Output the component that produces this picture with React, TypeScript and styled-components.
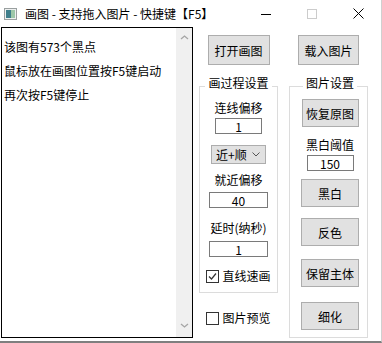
import React from 'react';
import styled, { createGlobalStyle } from 'styled-components';

const GlobalStyle = createGlobalStyle`
  html, body {
    margin: 0;
    padding: 0;
    background: #fff;
  }
  body {
    font-family: "Noto Sans CJK SC", "Microsoft YaHei", sans-serif;
    font-size: 12px;
    color: #000;
  }
  * {
    box-sizing: border-box;
  }
`;

const Window = styled.div`
  width: 382px;
  height: 343px;
  background: #fff;
  border-right: 1px solid #d0d0d0;
  border-bottom: 2px solid #7f7f7f;
  display: flex;
  flex-direction: column;
  overflow: hidden;
`;

const TitleBar = styled.div`
  height: 27px;
  flex-shrink: 0;
  display: flex;
  align-items: center;
`;

const AppIcon = styled.svg`
  margin-left: 4px;
  flex-shrink: 0;
`;

const Title = styled.span`
  flex: 1;
  margin-left: 8px;
  font-size: 12px;
  line-height: 16px;
  white-space: pre;
`;

const CaptionButton = styled.div`
  width: 46px;
  height: 27px;
  display: flex;
  align-items: center;
  justify-content: center;
`;

const Body = styled.div`
  flex: 1;
  display: flex;
  align-items: flex-start;
  padding-left: 1px;
`;

const TextPane = styled.div`
  width: 192px;
  height: 311px;
  border: 1px solid #000;
  display: flex;
  background: #fff;
`;

const TextContent = styled.div`
  flex: 1;
  padding: 7px 0 0 2px;
  font-size: 12px;
  line-height: 24px;
  white-space: nowrap;
`;

const ScrollTrack = styled.div`
  width: 16px;
  background: #f0f0f0;
  display: flex;
  flex-direction: column;
  justify-content: space-between;
  align-items: center;
  padding: 7px 0 9px;
`;

const Controls = styled.div`
  display: flex;
  gap: 11px;
  margin-left: 6px;
`;

const Column = styled.div`
  width: 79px;
  display: flex;
  flex-direction: column;
  align-items: center;
`;

const Button = styled.button<{ $w: number; $h: number; $mt: number }>`
  width: ${p => p.$w}px;
  height: ${p => p.$h}px;
  margin-top: ${p => p.$mt}px;
  flex-shrink: 0;
  padding: 0;
  background: #e1e1e1;
  border: 1px solid #adadad;
  border-radius: 0;
  font-family: inherit;
  font-size: 12px;
  color: #000;
`;

const GroupBox = styled.fieldset<{ $pb: number; $shift: number }>`
  width: 79px;
  margin: 11px 0 0;
  padding: 0 0 ${p => p.$pb}px ${p => p.$shift}px;
  min-width: 0;
  border: 1px solid #dcdcdc;
  display: flex;
  flex-direction: column;
  align-items: center;
`;

const GroupTitle = styled.legend`
  margin: 0 auto;
  padding: 0 3px 6px;
  font-size: 12px;
  line-height: 14px;
`;

const Label = styled.div<{ $mt: number }>`
  margin-top: ${p => p.$mt}px;
  font-size: 12px;
  line-height: 14px;
  white-space: nowrap;
`;

const NumberBox = styled.input<{ $w: number; $mt: number }>`
  width: ${p => p.$w}px;
  height: 16px;
  margin-top: ${p => p.$mt}px;
  padding: 0;
  border: 1px solid #7a7a7a;
  border-radius: 0;
  background: #fff;
  font-family: inherit;
  font-size: 12px;
  line-height: 14px;
  text-align: center;
  color: #000;
  outline: none;
`;

const ComboBox = styled.div`
  width: 55px;
  height: 19px;
  margin-top: 11px;
  padding: 0 5px 0 4px;
  background: #e1e1e1;
  border: 1px solid #adadad;
  display: flex;
  align-items: center;
  justify-content: space-between;
  font-size: 12px;
`;

const CheckRow = styled.label<{ $mt: number }>`
  margin-top: ${p => p.$mt}px;
  display: flex;
  align-items: center;
  gap: 3px;
  font-size: 12px;
  line-height: 14px;
  white-space: nowrap;
`;

const CheckBox = styled.span`
  width: 13px;
  height: 13px;
  border: 1px solid #333;
  background: #fff;
  display: flex;
  align-items: center;
  justify-content: center;
`;

const Chevron = ({ down }: { down?: boolean }) => (
  <svg width="9" height="5" viewBox="0 0 9 5">
    <path
      d={down ? 'M1 1 L4.5 4 L8 1' : 'M1 4 L4.5 1 L8 4'}
      fill="none"
      stroke="#a6a6a6"
      strokeWidth="1.3"
    />
  </svg>
);

const Check = ({ checked, label, mt }: { checked: boolean; label: string; mt: number }) => (
  <CheckRow $mt={mt}>
    <CheckBox>
      {checked && (
        <svg width="11" height="11" viewBox="0 0 11 11">
          <path d="M2 5.5 L4.5 8 L9 2.5" fill="none" stroke="#333" strokeWidth="1.2" />
        </svg>
      )}
    </CheckBox>
    {label}
  </CheckRow>
);

const lines = ['该图有573个黑点', '鼠标放在画图位置按F5键启动', '再次按F5键停止'];

export default function App() {
  return (
    <>
      <GlobalStyle />
      <Window>
        <TitleBar>
          <AppIcon width="13" height="12" viewBox="0 0 13 12">
            <rect x="0.5" y="0.5" width="12" height="11" fill="#eef0f0" stroke="#9aa0a0" />
            <rect x="2" y="2" width="5" height="8" fill="#3f7f8c" />
            <rect x="7" y="2" width="4" height="8" fill="#9cc7a8" />
          </AppIcon>
          <Title>画图 - 支持拖入图片 - 快捷键【F5】</Title>
          <CaptionButton>
            <svg width="10" height="10" viewBox="0 0 10 10">
              <path d="M0 5.5 H10" stroke="#000" strokeWidth="1" />
            </svg>
          </CaptionButton>
          <CaptionButton>
            <svg width="10" height="10" viewBox="0 0 10 10">
              <rect x="0.5" y="0.5" width="9" height="9" fill="none" stroke="#cccccc" />
            </svg>
          </CaptionButton>
          <CaptionButton>
            <svg width="11" height="11" viewBox="0 0 11 11">
              <path d="M0.5 0.5 L10.5 10.5 M10.5 0.5 L0.5 10.5" stroke="#000" strokeWidth="1" />
            </svg>
          </CaptionButton>
        </TitleBar>

        <Body>
          <TextPane>
            <TextContent>
              {lines.map(line => (
                <div key={line}>{line}</div>
              ))}
            </TextContent>
            <ScrollTrack>
              <Chevron />
              <Chevron down />
            </ScrollTrack>
          </TextPane>

          <Controls>
            <Column>
              <Button $w={62} $h={30} $mt={8}>打开画图</Button>
              <GroupBox $pb={9} $shift={0}>
                <GroupTitle>画过程设置</GroupTitle>
                <Label $mt={5}>连线偏移</Label>
                <NumberBox $w={47} $mt={3} value="1" readOnly />
                <ComboBox>
                  <span>近+顺</span>
                  <svg width="8" height="5" viewBox="0 0 8 5">
                    <path d="M0.5 0.5 L4 4 L7.5 0.5" fill="none" stroke="#555" strokeWidth="1" />
                  </svg>
                </ComboBox>
                <Label $mt={9}>就近偏移</Label>
                <NumberBox $w={59} $mt={5} value="40" readOnly />
                <Label $mt={13}>延时(纳秒)</Label>
                <NumberBox $w={59} $mt={6} value="1" readOnly />
                <Check checked label="直线速画" mt={12} />
              </GroupBox>
              <Check checked={false} label="图片预览" mt={18} />
            </Column>

            <Column>
              <Button $w={61} $h={30} $mt={8}>载入图片</Button>
              <GroupBox $pb={7} $shift={3}>
                <GroupTitle>图片设置</GroupTitle>
                <Button $w={57} $h={28} $mt={3}>恢复原图</Button>
                <Label $mt={11}>黑白阈值</Label>
                <NumberBox $w={47} $mt={3} value="150" readOnly />
                <Button $w={58} $h={28} $mt={8}>黑白</Button>
                <Button $w={58} $h={28} $mt={11}>反色</Button>
                <Button $w={58} $h={28} $mt={13}>保留主体</Button>
                <Button $w={58} $h={28} $mt={15}>细化</Button>
              </GroupBox>
            </Column>
          </Controls>
        </Body>
      </Window>
    </>
  );
}
